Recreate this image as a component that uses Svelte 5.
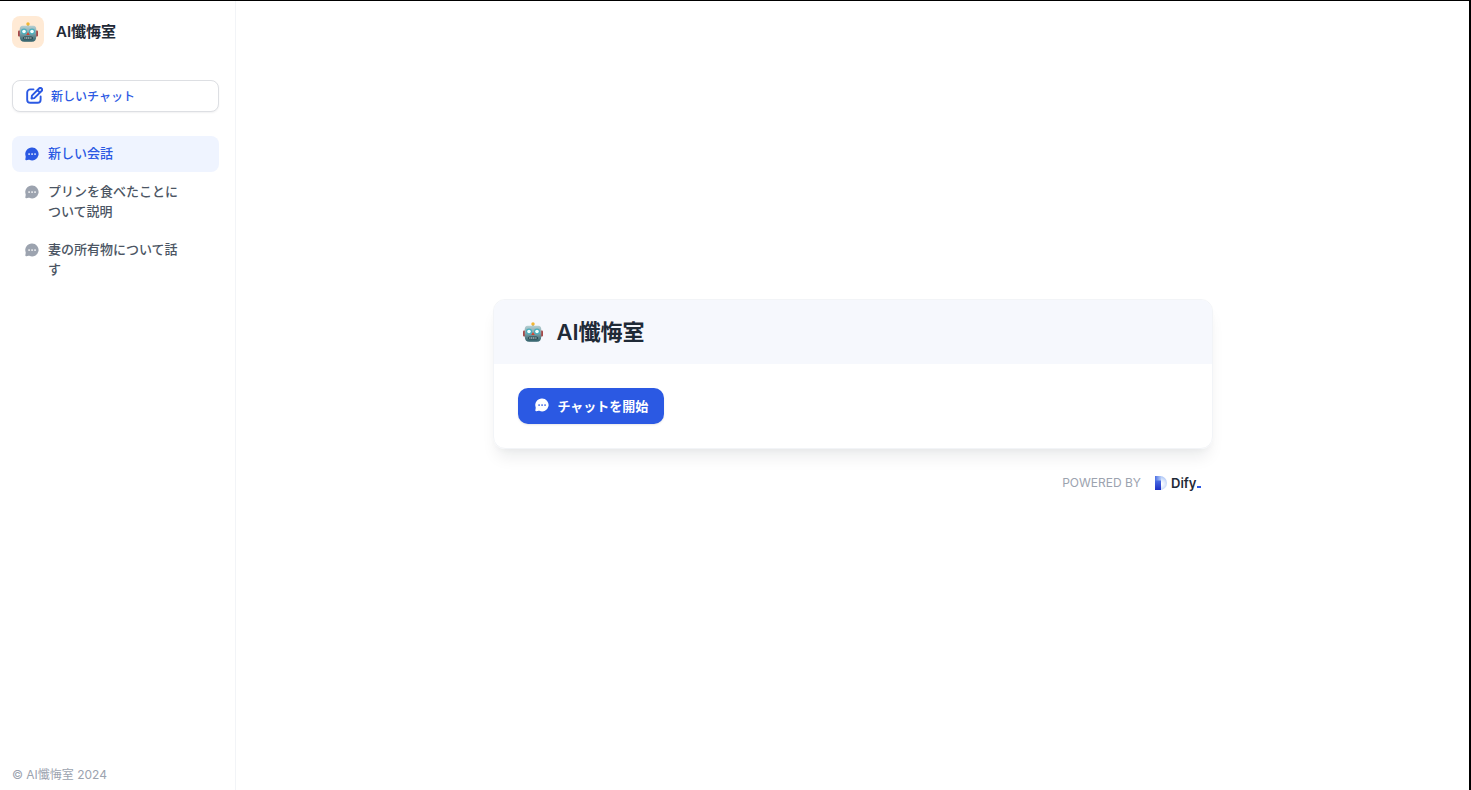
<script>
    const appName = "AI懺悔室";

    const conversations = [
        { id: 1, title: "新しい会話" },
        { id: 2, title: "プリンを食べたことについて説明" },
        { id: 3, title: "妻の所有物について話す" },
    ];

    let currentId = $state(1);
</script>

{#snippet robot()}
    <svg class="robot" viewBox="0 0 40 40" aria-hidden="true">
        <defs>
            <linearGradient id="robot-face" x1="0" y1="0" x2="0" y2="1">
                <stop offset="0" stop-color="#b5cfd2" />
                <stop offset="0.45" stop-color="#83a5ab" />
                <stop offset="1" stop-color="#2f5f69" />
            </linearGradient>
        </defs>
        <rect x="18.5" y="3" width="3" height="6" fill="#8b9a9b" />
        <circle cx="20" cy="4" r="3.500" fill="#f2b632" />
        <rect x="0" y="17" width="6" height="12" rx="2" fill="#a84848" />
        <rect x="34" y="17" width="6" height="12" rx="2" fill="#a84848" />
        <path d="M9 7.500h22c3.500 0 5.500 3 5.500 7v15c0 6-3 10-9 10h-15c-6 0-9-4-9-10v-15c0-4 2-7 5.500-7z" fill="url(#robot-face)" />
        <circle cx="12" cy="19" r="6" fill="#49aebd" />
        <circle cx="28" cy="19" r="6" fill="#49aebd" />
        <circle cx="12" cy="19" r="3.600" fill="#f2ffff" />
        <circle cx="28" cy="19" r="3.600" fill="#f2ffff" />
        <path d="M20 20l3.500 6h-7z" fill="#d4432f" />
        <rect x="10" y="29" width="20" height="6" rx="3" fill="#294850" />
        <path d="M12.500 32h15" stroke="#e3eded" stroke-width="2.400" stroke-dasharray="2.500 1" />
    </svg>
{/snippet}

{#snippet bubble()}
    <svg class="bubble" viewBox="0 0 16 16" aria-hidden="true">
        <path
            fill="currentColor"
            d="M8 .6a7.400 7.400 0 1 1-3 14.100c-.4-.1-.6-.1-1 0l-2.400.5c-.8.1-1.300-.3-1.200-1.100l.4-2.700c0-.4 0-.6-.1-1A7.400 7.400 0 0 1 8 .6z"
        />
        <path class="dots" d="M3.700 7.100h2v2h-2zM7.100 7.100h2v2h-2zM10.500 7.100h2v2h-2z" />
    </svg>
{/snippet}

<div class="app">
    <aside class="sidebar">
        <header class="brand">
            <span class="brand-icon">{@render robot()}</span>
            <span class="brand-name">{appName}</span>
        </header>

        <button class="new-chat" type="button">
            <svg class="edit" viewBox="1.500 1 21.500 21.500" aria-hidden="true">
                <path
                    fill="none"
                    stroke="currentColor"
                    stroke-width="2.400"
                    stroke-linecap="round"
                    stroke-linejoin="round"
                    d="M11 4H7a4 4 0 0 0-4 4v9a4 4 0 0 0 4 4h9a4 4 0 0 0 4-4v-4M8.500 15.700l.5-3.800L18 2.900a2.200 2.200 0 0 1 3.200 3.200L12 15zM16 5l3 3"
                />
            </svg>
            新しいチャット
        </button>

        <nav class="conversations">
            {#each conversations as item (item.id)}
                <button
                    type="button"
                    class="conversation"
                    class:active={currentId === item.id}
                    onclick={() => (currentId = item.id)}
                >
                    {@render bubble()}
                    <span class="title">{item.title}</span>
                </button>
            {/each}
        </nav>

        <footer class="copyright">© {appName} 2024</footer>
    </aside>

    <main class="main">
        <div class="welcome">
            <section class="card">
                <header class="card-head">
                    <span class="card-icon">{@render robot()}</span>
                    <h1>{appName}</h1>
                </header>
                <div class="card-body">
                    <button class="start" type="button">
                        {@render bubble()}
                        チャットを開始
                    </button>
                </div>
            </section>

            <div class="powered">
                <span>POWERED BY</span>
                <a class="dify" href="https://dify.ai" aria-label="Dify">
                    <svg class="dify-mark" viewBox="0 0 12 14" aria-hidden="true">
                        <defs>
                            <radialGradient id="dify-bowl" gradientUnits="userSpaceOnUse" cx="6" cy="8" r="8">
                                <stop offset="0.1" stop-color="#ffffff" />
                                <stop offset="0.5" stop-color="#dfe9fc" />
                                <stop offset="1" stop-color="#a9c3f6" />
                            </radialGradient>
                            <linearGradient id="dify-top" x1="0" y1="0" x2="1" y2="0">
                                <stop offset="0" stop-color="#4d70e4" />
                                <stop offset="1" stop-color="#b3cbf8" />
                            </linearGradient>
                            <linearGradient id="dify-stem" x1="0" y1="0" x2="0" y2="1">
                                <stop offset="0" stop-color="#4a6de4" />
                                <stop offset="1" stop-color="#1c2fc4" />
                            </linearGradient>
                        </defs>
                        <path d="M5 0a7 7 0 0 1 0 14z" fill="url(#dify-bowl)" />
                        <path d="M0 0h6v5H0z" fill="url(#dify-top)" />
                        <path d="M0 4.500h6V14H0z" fill="url(#dify-stem)" />
                    </svg>
                    <span class="dify-name">Dify<span class="cursor"></span></span>
                </a>
            </div>
        </div>
    </main>
</div>

<style>
    :global(body) {
        margin: 0;
        background: #fff;
        font-family: Inter, "Noto Sans CJK JP", sans-serif;
    }

    .app {
        display: flex;
        box-sizing: border-box;
        min-height: 100vh;
        border-top: 1px solid #000;
        border-right: 2px solid #000;
    }

    button {
        font-family: inherit;
        cursor: pointer;
    }

    svg {
        display: block;
        flex-shrink: 0;
    }

    /* sidebar */
    .sidebar {
        display: flex;
        flex-direction: column;
        flex-shrink: 0;
        box-sizing: border-box;
        width: 236px;
        padding: 15px 16px 3px 12px;
        border-right: 1px solid #f2f4f7;
    }

    .brand {
        display: flex;
        align-items: center;
        gap: 12px;
    }

    .brand-icon {
        display: grid;
        place-items: center;
        width: 32px;
        height: 32px;
        border-radius: 8px;
        background: #ffead5;
    }

    .robot {
        width: 20px;
        height: 20px;
    }

    .brand-name {
        font-size: 15px;
        line-height: 24px;
        font-weight: 600;
        color: #1f2a37;
    }

    .new-chat {
        display: flex;
        align-items: center;
        gap: 8px;
        height: 32px;
        margin-top: 32px;
        padding: 0 13px 1px;
        border: 1px solid #dddfe3;
        border-radius: 8px;
        background: #fff;
        box-shadow: 0 1px 2px rgba(16, 24, 40, 0.06);
        color: #2b59e3;
        font-size: 12px;
        font-weight: 500;
    }

    .edit {
        width: 17px;
        height: 17px;
    }

    .conversations {
        display: flex;
        flex-direction: column;
        gap: 2px;
        margin-top: 24px;
    }

    .conversation {
        display: flex;
        align-items: flex-start;
        gap: 8px;
        padding: 7px 36px 9px 12px;
        border: 0;
        border-radius: 8px;
        background: none;
        color: #9ca3af;
        text-align: left;
        font-size: 13px;
        line-height: 20px;
        font-weight: 500;
    }

    .conversation .bubble {
        width: 14px;
        height: 14px;
        margin: 4px 1px 0;
    }

    .dots {
        fill: #fff;
        opacity: 0.7;
    }

    .title {
        color: #4b5563;
    }

    .conversation.active {
        background: #eff4ff;
        color: #2b59e3;
    }

    .active .title {
        color: inherit;
    }

    .copyright {
        margin-top: auto;
        font-size: 12px;
        line-height: 24px;
        color: #9ca3af;
    }

    /* welcome card */
    .main {
        display: flex;
        flex: 1;
        align-items: center;
        justify-content: center;
        padding: 0 24px;
    }

    .welcome {
        width: 100%;
        max-width: 720px;
    }

    .card {
        overflow: hidden;
        border: 1px solid #f2f4f7;
        border-radius: 12px;
        box-shadow: 0 12px 16px -4px rgba(16, 24, 40, 0.08), 0 4px 6px -2px rgba(16, 24, 40, 0.03);
    }

    .card-head {
        display: flex;
        align-items: center;
        gap: 14px;
        height: 64px;
        padding: 0 29px;
        background: #f6f8fd;
    }

    h1 {
        margin: 0;
        font-size: 22px;
        line-height: 32px;
        font-weight: 600;
        color: #1f2a37;
    }

    .card-body {
        padding: 24px;
    }

    .start {
        display: flex;
        align-items: center;
        gap: 8px;
        height: 36px;
        padding: 0 16px 1px;
        border: 0;
        border-radius: 10px;
        background: #2b59e3;
        box-shadow: 0 1px 2px rgba(16, 24, 40, 0.1);
        color: #fff;
        font-size: 13px;
        font-weight: 600;
    }

    .start .bubble {
        width: 14px;
        height: 14px;
        margin: 0 1px;
    }

    .start .dots {
        fill: #2b59e3;
    }

    .powered {
        display: flex;
        align-items: center;
        justify-content: flex-end;
        gap: 14px;
        height: 20px;
        padding: 24px 12px 0;
        font-size: 12px;
        color: #9ca3af;
    }

    .dify {
        display: flex;
        align-items: center;
        gap: 4px;
        text-decoration: none;
        color: #1f2a37;
    }

    .dify-mark {
        width: 12px;
        height: 14px;
    }

    .dify-name {
        display: flex;
        align-items: baseline;
        font-size: 13px;
        line-height: 16px;
        font-weight: 600;
    }

    .cursor {
        width: 4px;
        height: 2px;
        background: #2b59e3;
    }
</style>
